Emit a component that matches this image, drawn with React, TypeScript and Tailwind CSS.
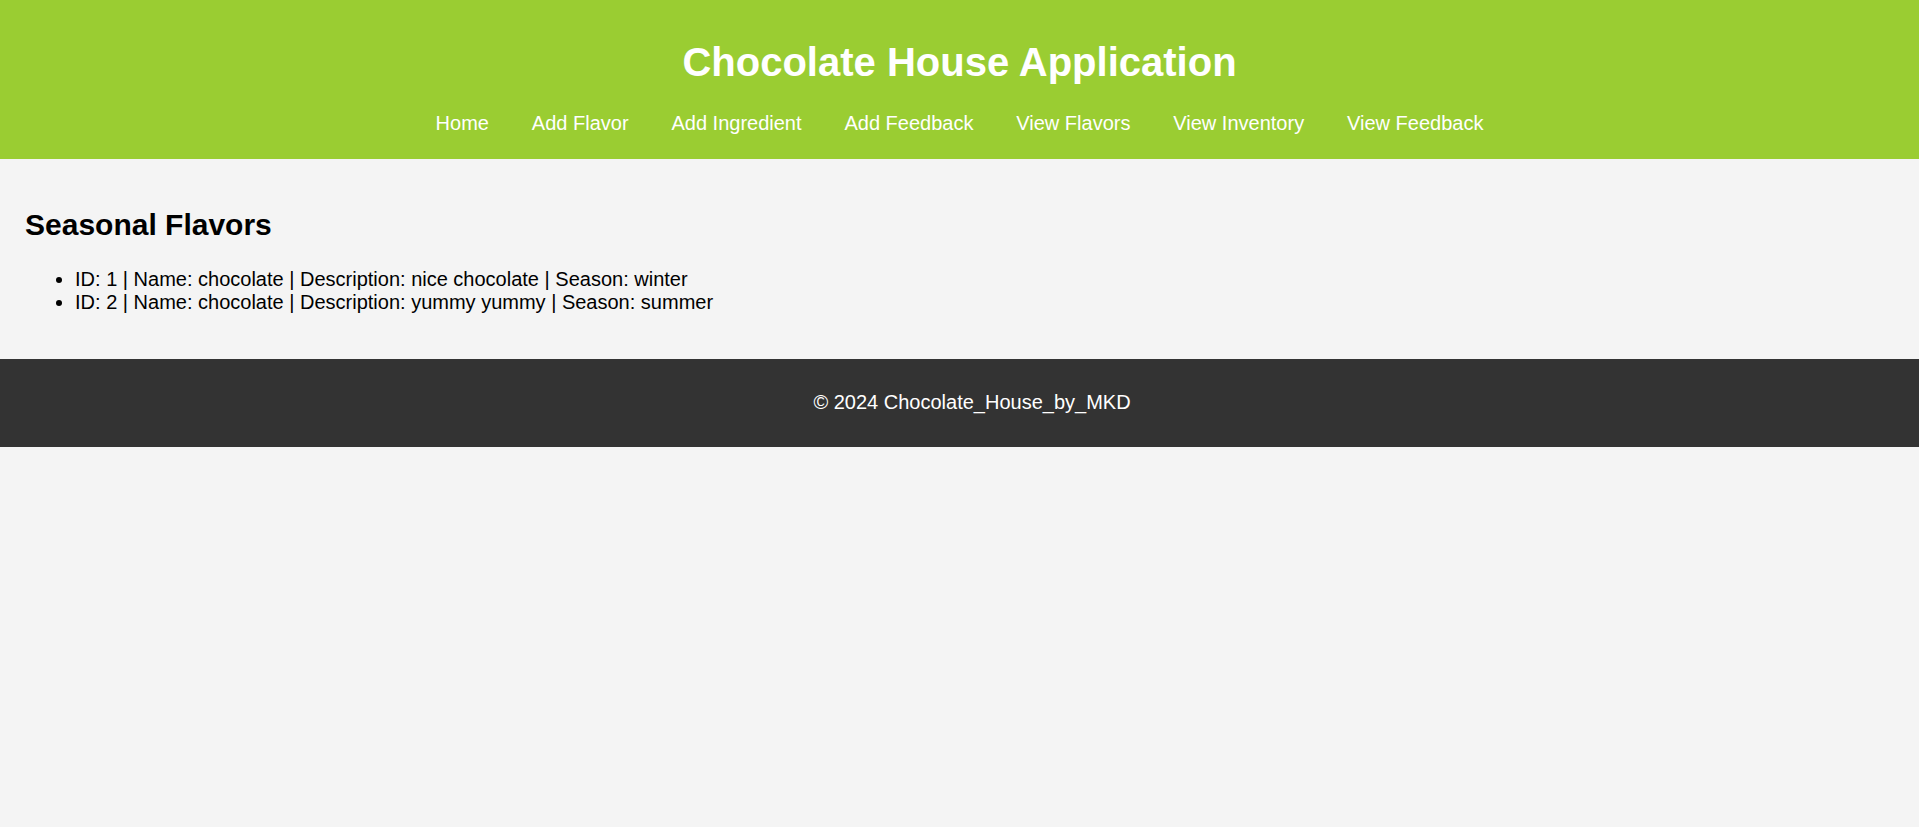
const navLinks = [
  'Home',
  'Add Flavor',
  'Add Ingredient',
  'Add Feedback',
  'View Flavors',
  'View Inventory',
  'View Feedback',
];

const flavors = [
  { id: 1, name: 'chocolate', description: 'nice chocolate', season: 'winter' },
  { id: 2, name: 'chocolate', description: 'yummy yummy', season: 'summer' },
];

export default function App() {
  return (
    <div className="min-h-[827px] bg-[#f4f4f4] text-[20px] leading-[23px] text-black font-['Liberation_Sans',Arial,sans-serif]">
      {/* Header */}
      <header className="bg-[#9acd32] pt-[12.5px] pb-[12.5px] text-center text-white">
        <h1 className="my-[26.8px] text-[40px] leading-[46px] font-bold">
          Chocolate House Application
        </h1>
        <nav className="flex justify-center gap-[42.9px] pb-[11px]">
          {navLinks.map((link) => (
            <a key={link} href="#" className="text-white no-underline">
              {link}
            </a>
          ))}
        </nav>
      </header>

      {/* Seasonal flavors */}
      <main className="p-[25px]">
        <h2 className="mt-[24.9px] mb-[24.9px] text-[30px] leading-[34.5px] font-bold">
          Seasonal Flavors
        </h2>
        <ul className="mb-[20px] list-disc pl-[50px]">
          {flavors.map((f) => (
            <li key={f.id}>
              ID: {f.id} | Name: {f.name} | Description: {f.description} | Season: {f.season}
            </li>
          ))}
        </ul>
      </main>

      {/* Footer */}
      <footer className="bg-[#333333] py-[12.5px] pl-[25px] text-center text-white">
        <p className="my-[20px]">© 2024 Chocolate_House_by_MKD</p>
      </footer>
    </div>
  );
}
